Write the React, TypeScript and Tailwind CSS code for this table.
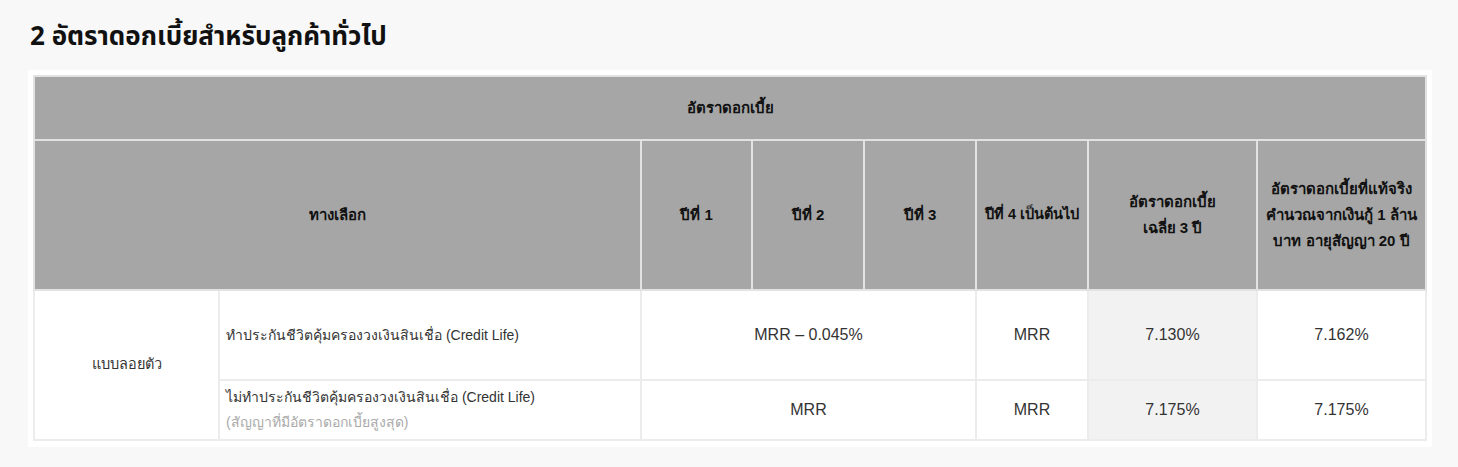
export default function App() {
  const th = "border-2 border-[#e2e2e2] font-bold text-center align-middle text-[#111]";
  const td = "border-2 border-[#ececec] text-center align-middle text-[#333]";
  return (
    <div className="min-h-[467px] w-[1458px] bg-[#f8f8f8] font-['Noto_Sans_Thai','Noto_Sans','Liberation_Sans',sans-serif]">
      <h2 className="pl-[30px] pt-[19px] text-[26px] font-bold leading-[36px] text-[#111]">
        2 อัตราดอกเบี้ยสำหรับลูกค้าทั่วไป
      </h2>
      <div className="ml-[28px] mt-[15px] w-[1404px] bg-white p-[5px] pb-[6px]">
        <table className="w-[1394px] table-fixed border-collapse font-['Liberation_Sans',sans-serif]">
          <colgroup>
            <col className="w-[185px]" />
            <col className="w-[422px]" />
            <col className="w-[111px]" />
            <col className="w-[112px]" />
            <col className="w-[112px]" />
            <col className="w-[112px]" />
            <col className="w-[169px]" />
            <col className="w-[169px]" />
          </colgroup>
          <thead className="bg-[#a6a6a6]">
            <tr className="h-[64px]">
              <th colSpan={8} className={`${th} text-[15px]`}>อัตราดอกเบี้ย</th>
            </tr>
            <tr className="h-[150px]">
              <th colSpan={2} className={`${th} text-[15px]`}>ทางเลือก</th>
              <th className={`${th} text-[15px]`}>ปีที่ 1</th>
              <th className={`${th} text-[15px]`}>ปีที่ 2</th>
              <th className={`${th} text-[15px]`}>ปีที่ 3</th>
              <th className={`${th} px-0 text-[14.5px]`}>ปีที่ 4 เป็นต้นไป</th>
              <th className={`${th} text-[15px] leading-[26px]`}>
                อัตราดอกเบี้ย
                <br />
                เฉลี่ย 3 ปี
              </th>
              <th className={`${th} px-1 text-[15px] leading-[26px]`}>
                อัตราดอกเบี้ยที่แท้จริง คำนวณจากเงินกู้ 1 ล้าน บาท อายุสัญญา 20 ปี
              </th>
            </tr>
          </thead>
          <tbody>
            <tr className="h-[90px]">
              <td rowSpan={2} className={`${td} text-[14.5px]`}>แบบลอยตัว</td>
              <td className={`${td} px-[6px] text-left text-[14px]`}>
                ทำประกันชีวิตคุ้มครองวงเงินสินเชื่อ (Credit Life)
              </td>
              <td colSpan={3} className={`${td} text-[16px]`}>MRR – 0.045%</td>
              <td className={`${td} text-[16px]`}>MRR</td>
              <td className={`${td} bg-[#f2f2f2] text-[16px]`}>7.130%</td>
              <td className={`${td} text-[16px]`}>7.162%</td>
            </tr>
            <tr className="h-[60px]">
              <td className={`${td} px-[6px] text-left text-[14px] leading-[25px]`}>
                ไม่ทำประกันชีวิตคุ้มครองวงเงินสินเชื่อ (Credit Life)
                <br />
                <span className="text-[#aaa]">(สัญญาที่มีอัตราดอกเบี้ยสูงสุด)</span>
              </td>
              <td colSpan={3} className={`${td} text-[16px]`}>MRR</td>
              <td className={`${td} text-[16px]`}>MRR</td>
              <td className={`${td} bg-[#f2f2f2] text-[16px]`}>7.175%</td>
              <td className={`${td} text-[16px]`}>7.175%</td>
            </tr>
          </tbody>
        </table>
      </div>
    </div>
  );
}
